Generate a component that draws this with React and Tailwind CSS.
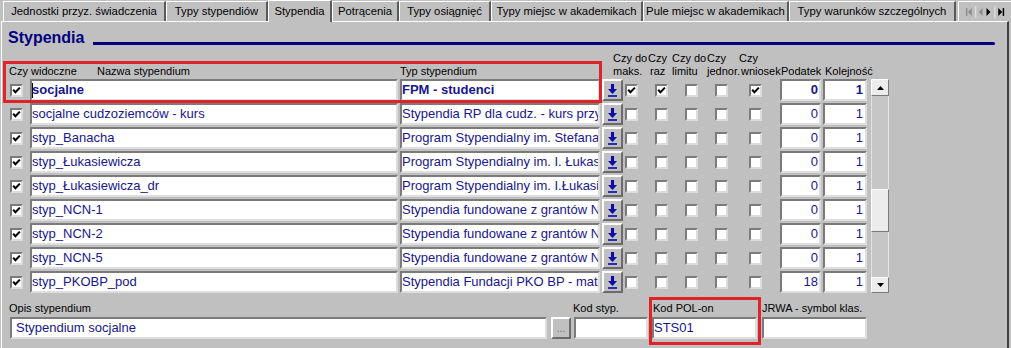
import React from "react";
import clsx from "clsx";

function Check({ checked, className }) {
  return (
    <div
      className={clsx(
        "w-[13px] h-[13px] shrink-0 bg-white border-2 border-t-[#7b7b7b] border-l-[#7b7b7b] border-r-[#dcdcdc] border-b-[#dcdcdc] flex items-center justify-center",
        className
      )}
    >
      {checked && (
        <svg width="9" height="9" viewBox="0 0 9 9">
          <path d="M1.2 3.8 L3.4 6.2 L7.9 1.6" fill="none" stroke="#000" strokeWidth="2" />
        </svg>
      )}
    </div>
  );
}

function Field({ className, children, right, bold }) {
  return (
    <div
      className={clsx(
        "h-[22px] shrink-0 bg-white border-2 border-t-[#7b7b7b] border-l-[#7b7b7b] border-r-[#dedede] border-b-[#dedede] flex items-center overflow-hidden whitespace-nowrap text-[13px] leading-[16px] text-[#16168e]",
        right && "justify-end",
        bold && "font-bold",
        className
      )}
    >
      {children}
    </div>
  );
}

function DownBtn() {
  return (
    <div className="ml-[2px] w-[21px] h-[22px] shrink-0 bg-[#c0c0c0] border-2 border-t-white border-l-white border-r-[#6a6a6a] border-b-[#6a6a6a] flex items-center justify-center">
      <svg width="9" height="13" viewBox="0 0 9 13">
        <rect x="3" y="0" width="3" height="6" fill="#0a0aa8" />
        <polygon points="0,5 9,5 4.5,10" fill="#0a0aa8" />
        <rect x="0" y="11.2" width="9" height="1.6" fill="#0a0aa8" />
      </svg>
    </div>
  );
}

const tabs = [
  { label: "Jednostki przyz. świadczenia", w: "w-[163px]" },
  { label: "Typy stypendiów", w: "w-[102px]" },
  { label: "Stypendia", w: "w-[64px]", active: true },
  { label: "Potrącenia", w: "w-[67px]" },
  { label: "Typy osiągnięć", w: "w-[92px]" },
  { label: "Typy miejsc w akademikach", w: "w-[152px]" },
  { label: "Pule miejsc w akademikach", w: "w-[146px]" },
  { label: "Typy warunków szczególnych", w: "w-[167px]" },
];

const rows = [
  { name: "socjalne", type: "FPM - studenci", p: "0", k: "1", bold: true, c: [true, true, false, false, true] },
  { name: "socjalne cudzoziemców - kurs", type: "Stypendia RP dla cudz. - kurs przygotowawczy", p: "0", k: "1" },
  { name: "styp_Banacha", type: "Program Stypendialny im. Stefana Banacha", p: "0", k: "1" },
  { name: "styp_Łukasiewicza", type: "Program Stypendialny im. I. Łukasiewicza", p: "0", k: "1" },
  { name: "styp_Łukasiewicza_dr", type: "Program Stypendialny im. I.Łukasiewicza dr", p: "0", k: "1" },
  { name: "styp_NCN-1", type: "Stypendia fundowane z grantów NCN", p: "0", k: "1" },
  { name: "styp_NCN-2", type: "Stypendia fundowane z grantów NCN", p: "0", k: "1" },
  { name: "styp_NCN-5", type: "Stypendia fundowane z grantów NCN", p: "0", k: "1" },
  { name: "styp_PKOBP_pod", type: "Stypendia Fundacji PKO BP - matematyka", p: "18", k: "1" },
];

function Row({ r }) {
  const c = r.c || [false, false, false, false, false];
  return (
    <div className="flex items-center h-[22px]">
      <Check checked className="ml-[8px]" />
      <Field className="ml-[7px] w-[368px]" bold={r.bold}>
        {r.bold && <span className="inline-block w-px h-[15px] bg-black -mr-px shrink-0" />}
        {r.name}
      </Field>
      <Field className="ml-[2px] w-[200px]" bold={r.bold}>
        {r.type}
      </Field>
      <DownBtn />
      <Check checked={c[0]} className="ml-[2px]" />
      <Check checked={c[1]} className="ml-[17px]" />
      <Check checked={c[2]} className="ml-[17px]" />
      <Check checked={c[3]} className="ml-[17px]" />
      <Check checked={c[4]} className="ml-[21px]" />
      <Field className="ml-[18px] w-[41px] pr-[1px]" right bold={r.bold}>
        {r.p}
      </Field>
      <Field className="ml-[2px] w-[44px] pr-[2px]" right bold={r.bold}>
        {r.k}
      </Field>
    </div>
  );
}

function ScrollBtn({ down, className }) {
  return (
    <div
      className={clsx(
        "w-[18px] shrink-0 bg-[#ececec] border border-t-white border-l-white border-r-[#7a7a7a] border-b-[#7a7a7a] flex items-center justify-center",
        className
      )}
    >
      <svg width="7" height="4" viewBox="0 0 7 4">
        {down ? <polygon points="0,0 7,0 3.5,4" fill="#000" /> : <polygon points="0,4 7,4 3.5,0" fill="#000" />}
      </svg>
    </div>
  );
}

export default function App() {
  return (
    <div className="relative w-[1011px] h-[348px] overflow-hidden bg-[#c0c0c0] font-['Liberation_Sans',Arial,sans-serif] text-black">
      {/* Tab strip */}
      <div className="flex items-start h-[21px] pl-[3px]">
        {tabs.map((t) =>
          t.active ? (
            <div
              key={t.label}
              className={clsx(
                "relative z-10 h-[22px] shrink-0 bg-[#c0c0c0] border-t border-l border-white border-r-2 border-r-[#5a5a5a] flex items-center justify-center text-[11.3px] whitespace-nowrap",
                t.w
              )}
            >
              {t.label}
            </div>
          ) : (
            <div
              key={t.label}
              className={clsx(
                "mt-[1px] h-[20px] shrink-0 bg-[#c0c0c0] border-t border-l border-white border-r-2 border-r-[#5a5a5a] flex items-center justify-center text-[11.3px] whitespace-nowrap",
                t.w
              )}
            >
              {t.label}
            </div>
          )
        )}
        <div className="ml-[2px] mt-[1px] h-[20px] w-[53px] shrink-0 border-t border-l border-white flex items-center">
          <svg width="50" height="12" viewBox="0 0 50 12" className="ml-[3px]">
            <rect x="4" y="2" width="1.5" height="8" fill="#8c8c8c" />
            <polygon points="10,2 10,10 6,6" fill="#8c8c8c" />
            <rect x="13.5" y="0" width="1" height="12" fill="#e8e8e8" />
            <polygon points="21,2 21,10 17,6" fill="#8c8c8c" />
            <polygon points="25,2 25,10 29,6" fill="#000" />
            <rect x="33" y="0" width="1" height="12" fill="#e8e8e8" />
            <polygon points="37,2 37,10 41,6" fill="#000" />
            <rect x="41.5" y="2" width="1.5" height="8" fill="#000" />
          </svg>
        </div>
      </div>

      {/* Panel */}
      <div className="ml-[1px] w-[1008px] h-[327px] border-t border-l border-white border-r-2 border-r-[#404040]">
        {/* Title */}
        <div className="flex items-start h-[20px] mt-[6px]">
          <div className="ml-[6px] text-[16px] leading-[20px] font-bold text-[#000080]">Stypendia</div>
          <div className="ml-[9px] mt-[14px] h-[3px] flex-1 mr-[12px] bg-[#000080] rounded-r-full" />
        </div>

        {/* Header */}
        <div className="flex h-[26px] mt-[4px] text-[11px] leading-[13px] whitespace-nowrap">
          <div className="ml-[7px] w-[88px] self-end">Czy widoczne</div>
          <div className="w-[303px] self-end">Nazwa stypendium</div>
          <div className="w-[213px] self-end">Typ stypendium</div>
          <div className="w-[35px]">
            Czy do
            <br />
            maks.
          </div>
          <div className="w-[24px]">
            Czy
            <br />
            <span className="pl-[2px]">raz</span>
          </div>
          <div className="w-[35px]">
            Czy do
            <br />
            limitu
          </div>
          <div className="w-[32px]">
            Czy
            <br />
            jednor.
          </div>
          <div className="w-[42px]">
            Czy
            <br />
            <span className="pl-[2px]">wniosek</span>
          </div>
          <div className="w-[44px] self-end">Podatek</div>
          <div className="self-end">Kolejność</div>
        </div>

        {/* Rows + scrollbar */}
        <div className="flex items-start mt-[1px]">
          <div className="flex flex-col gap-[2px]">
            {rows.map((r) => (
              <Row key={r.name} r={r} />
            ))}
          </div>
          <div className="ml-[4px] w-[18px] h-[214px] flex flex-col">
            <ScrollBtn className="h-[17px]" />
            <div className="h-[93px] bg-[#c6c6c6] border-l border-r border-[#e4e4e4]" />
            <div className="h-[43px] bg-[#ececec] border border-t-white border-l-white border-r-[#7a7a7a] border-b-[#7a7a7a]" />
            <div className="h-[45px] bg-[#c6c6c6] border-l border-r border-[#e4e4e4]" />
            <ScrollBtn down className="h-[16px]" />
          </div>
        </div>

        {/* Bottom fields */}
        <div className="flex items-end mt-[9px] text-[11px] leading-[13px] whitespace-nowrap">
          <div className="ml-[8px] flex flex-col">
            <div className="-ml-px">Opis stypendium</div>
            <Field className="mt-[2px] w-[537px] pl-[4px]">Stypendium socjalne</Field>
          </div>
          <div className="ml-[4px] w-[20px] h-[22px] shrink-0 bg-[#c0c0c0] border-2 border-t-white border-l-white border-r-[#6a6a6a] border-b-[#6a6a6a] flex items-end justify-center pb-[3px] text-[10px] leading-none text-[#6a6a6a]">
            ...
          </div>
          <div className="ml-[3px] flex flex-col">
            <div className="-ml-px">Kod styp.</div>
            <Field className="mt-[2px] w-[74px]" />
          </div>
          <div className="ml-[4px] flex flex-col">
            <div className="ml-px">Kod POL-on</div>
            <Field className="mt-[2px] w-[105px]">STS01</Field>
          </div>
          <div className="ml-[5px] flex flex-col">
            <div>JRWA - symbol klas.</div>
            <Field className="mt-[2px] w-[105px]" />
          </div>
        </div>
      </div>

      {/* Red highlight annotations */}
      <div className="absolute left-[3px] top-[61px] w-[599px] h-[42px] border-[3px] border-[#e0222b] pointer-events-none" />
      <div className="absolute left-[649px] top-[297px] w-[112px] h-[48px] border-[3px] border-[#e0222b] pointer-events-none" />
    </div>
  );
}
